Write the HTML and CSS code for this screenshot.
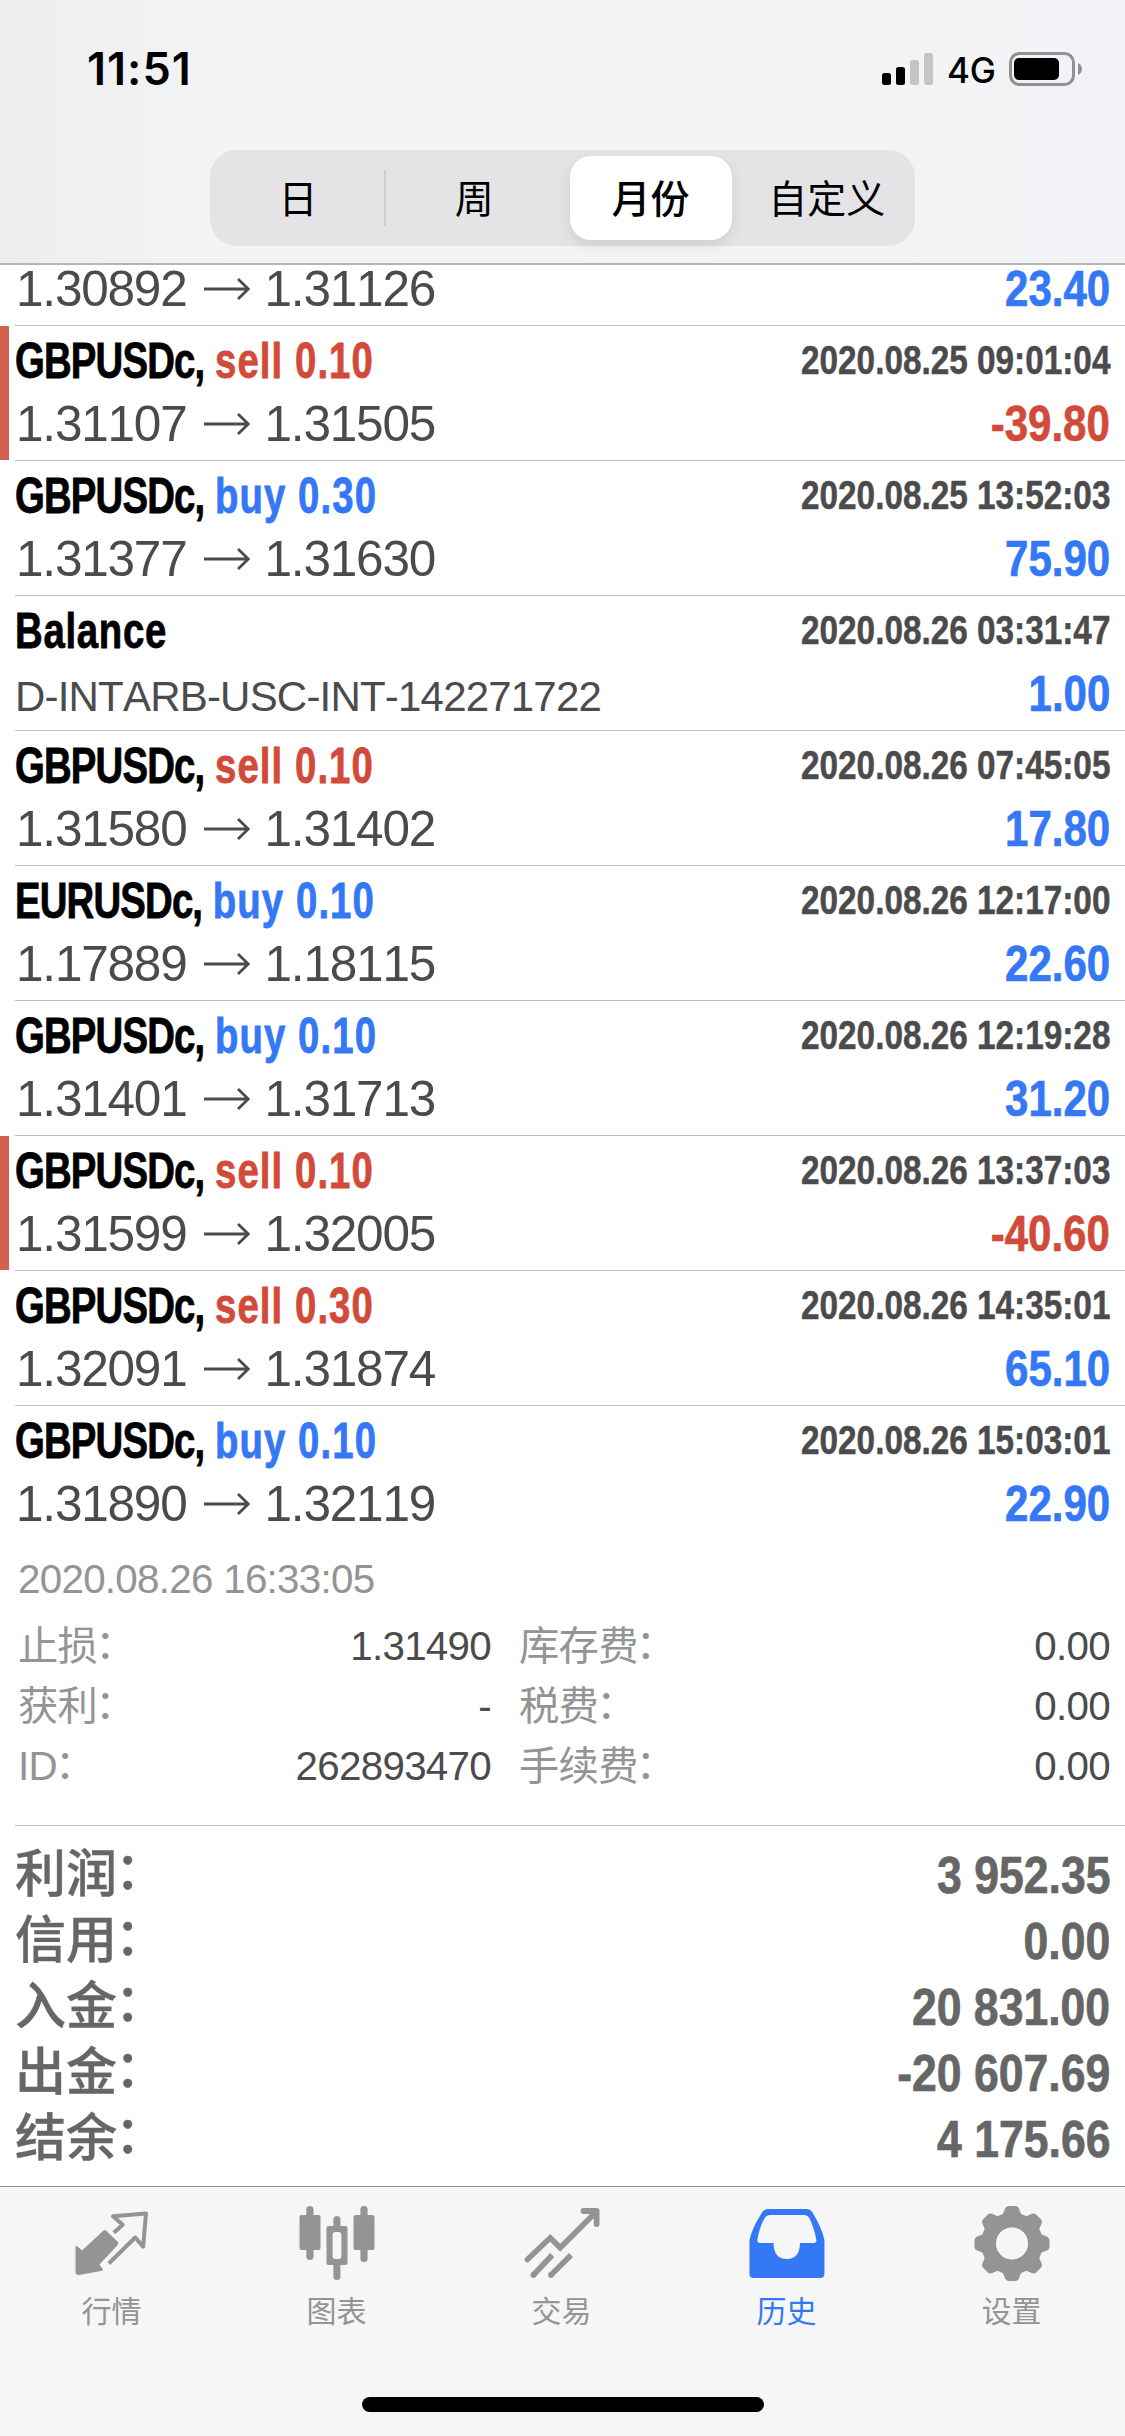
FILE: index.html
```html
<!DOCTYPE html>
<html lang="zh-CN">
<head>
<meta charset="utf-8">
<title>历史</title>
<link rel="stylesheet" href="styles.css">
</head>
<body>
<svg class="defs" width="0" height="0" aria-hidden="true">
  <symbol id="arrow" viewBox="0 0 46 24"><path d="M0 12H44M34 2L44.3 12L34 22" fill="none" stroke="currentColor" stroke-width="2.8"/></symbol>
</svg>
<header class="header">
  <div class="status">
    <span class="clock">11:51</span>
    <div class="indicators">
      <svg class="signal" viewBox="0 0 53 33"><rect y="20" width="9" height="12" rx="2.5"/><rect x="14" y="14" width="9" height="18" rx="2.5"/><rect x="28" y="7" width="9" height="25" rx="2.5" fill="#c4c4c6"/><rect x="42" width="9" height="32" rx="2.5" fill="#c4c4c6"/></svg>
      <span class="network">4G</span>
      <svg class="battery" viewBox="0 0 74 34"><rect x="1.5" y="1.5" width="63" height="31" rx="9" fill="none" stroke="#919193" stroke-width="3"/><rect x="5" y="6" width="45" height="22" rx="5"/><path d="M69 11q4 2 4 6t-4 6z" fill="#919193"/></svg>
    </div>
  </div>
  <nav class="segments">
    <span class="segment divided">日</span>
    <span class="segment">周</span>
    <span class="segment selected">月份</span>
    <span class="segment">自定义</span>
  </nav>
</header>

<main class="history">
  <div class="deal clipped"><div class="line"><span class="price">1.30892<svg class="arrow"><use href="#arrow"/></svg>1.31126</span><span class="profit blue">23.40</span></div></div>
  <div class="deal loss"><div class="line head"><span class="title"><span class="symbol">GBPUSDc,</span> <span class="side red">sell 0.10</span></span><span class="time">2020.08.25 09:01:04</span></div><div class="line"><span class="price">1.31107<svg class="arrow"><use href="#arrow"/></svg>1.31505</span><span class="profit red">-39.80</span></div></div>
  <div class="deal"><div class="line head"><span class="title"><span class="symbol">GBPUSDc,</span> <span class="side blue">buy 0.30</span></span><span class="time">2020.08.25 13:52:03</span></div><div class="line"><span class="price">1.31377<svg class="arrow"><use href="#arrow"/></svg>1.31630</span><span class="profit blue">75.90</span></div></div>
  <div class="deal"><div class="line head"><span class="title"><span class="symbol balance">Balance</span></span><span class="time">2020.08.26 03:31:47</span></div><div class="line"><span class="comment">D-INTARB-USC-INT-142271722</span><span class="profit blue">1.00</span></div></div>
  <div class="deal"><div class="line head"><span class="title"><span class="symbol">GBPUSDc,</span> <span class="side red">sell 0.10</span></span><span class="time">2020.08.26 07:45:05</span></div><div class="line"><span class="price">1.31580<svg class="arrow"><use href="#arrow"/></svg>1.31402</span><span class="profit blue">17.80</span></div></div>
  <div class="deal"><div class="line head"><span class="title"><span class="symbol">EURUSDc,</span> <span class="side blue">buy 0.10</span></span><span class="time">2020.08.26 12:17:00</span></div><div class="line"><span class="price">1.17889<svg class="arrow"><use href="#arrow"/></svg>1.18115</span><span class="profit blue">22.60</span></div></div>
  <div class="deal"><div class="line head"><span class="title"><span class="symbol">GBPUSDc,</span> <span class="side blue">buy 0.10</span></span><span class="time">2020.08.26 12:19:28</span></div><div class="line"><span class="price">1.31401<svg class="arrow"><use href="#arrow"/></svg>1.31713</span><span class="profit blue">31.20</span></div></div>
  <div class="deal loss"><div class="line head"><span class="title"><span class="symbol">GBPUSDc,</span> <span class="side red">sell 0.10</span></span><span class="time">2020.08.26 13:37:03</span></div><div class="line"><span class="price">1.31599<svg class="arrow"><use href="#arrow"/></svg>1.32005</span><span class="profit red">-40.60</span></div></div>
  <div class="deal"><div class="line head"><span class="title"><span class="symbol">GBPUSDc,</span> <span class="side red">sell 0.30</span></span><span class="time">2020.08.26 14:35:01</span></div><div class="line"><span class="price">1.32091<svg class="arrow"><use href="#arrow"/></svg>1.31874</span><span class="profit blue">65.10</span></div></div>
  <div class="deal expanded"><div class="line head"><span class="title"><span class="symbol">GBPUSDc,</span> <span class="side blue">buy 0.10</span></span><span class="time">2020.08.26 15:03:01</span></div><div class="line"><span class="price">1.31890<svg class="arrow"><use href="#arrow"/></svg>1.32119</span><span class="profit blue">22.90</span></div></div>

  <section class="details">
    <div class="opened">2020.08.26 16:33:05</div>
    <dl class="fields">
      <div class="field"><dt>止损<span class="colon">：</span></dt><dd>1.31490</dd></div>
      <div class="field"><dt>库存费<span class="colon">：</span></dt><dd>0.00</dd></div>
      <div class="field"><dt>获利<span class="colon">：</span></dt><dd>-</dd></div>
      <div class="field"><dt>税费<span class="colon">：</span></dt><dd>0.00</dd></div>
      <div class="field"><dt>ID<span class="colon">：</span></dt><dd>262893470</dd></div>
      <div class="field"><dt>手续费<span class="colon">：</span></dt><dd>0.00</dd></div>
    </dl>
  </section>

  <section class="totals">
    <div class="total"><span class="name">利润<span class="colon">：</span></span><span class="amount">3 952.35</span></div>
    <div class="total"><span class="name">信用<span class="colon">：</span></span><span class="amount">0.00</span></div>
    <div class="total"><span class="name">入金<span class="colon">：</span></span><span class="amount">20 831.00</span></div>
    <div class="total"><span class="name">出金<span class="colon">：</span></span><span class="amount">-20 607.69</span></div>
    <div class="total"><span class="name">结余<span class="colon">：</span></span><span class="amount">4 175.66</span></div>
  </section>
</main>

<footer class="tabbar">
  <nav class="tabs">
    <a class="tab"><svg class="icon" viewBox="0 0 78 78"><path d="M29 28Q30.8 26 32.5 28L43.5 38.5Q45 40 43.7 42L25.5 61.5L29 66.5Q28.8 68 27 68L5 72Q1.5 72 1.5 69V42.7Q4 43.5 8 47.5Z" fill="currentColor"/><path d="M39.8 29.8L48.7 21.7L39 13.3L72 10.4L69.2 43.7L61.2 34.5L34.8 60.5" fill="none" stroke="currentColor" stroke-width="4" stroke-linejoin="round"/></svg><span class="label">行情</span></a>
    <a class="tab"><svg class="icon" viewBox="0 0 78 78" fill="currentColor"><rect x=".5" y="12" width="21" height="35" rx="2"/><rect x="7.3" y="3" width="7.2" height="54" rx="3.5"/><path fill-rule="evenodd" d="M29.5 23H46.5Q48.5 23 48.5 25V60Q48.5 62 46.5 62H29.5Q27.5 62 27.5 60V25Q27.5 23 29.5 23ZM36.5 29Q33.6 29 33.6 32V53Q33.6 56 36.5 56H39.5Q42.4 56 42.4 53V32Q42.4 29 39.5 29Z"/><path d="M34.4 24V16.5a3.5 3.5 0 0 1 7 0V24ZM34.4 61V73.5a3.5 3.5 0 0 0 7 0V61Z"/><rect x="54.5" y="12" width="21" height="35" rx="2"/><rect x="61.4" y="3" width="7.2" height="56" rx="3.5"/></svg><span class="label">图表</span></a>
    <a class="tab"><svg class="icon" viewBox="0 0 78 78" fill="none" stroke="currentColor" stroke-width="5.6"><path d="M3.4 56.5L26.2 34.8L36.2 44.8L71.5 9.5" stroke-linecap="round" stroke-linejoin="miter"/><path d="M59.5 8H72.6V21" stroke-width="5.8" stroke-linecap="round" stroke-linejoin="round"/><path d="M28.2 52L9.4 72M47 52L27 72"/><g fill="currentColor" stroke="none"><circle cx="9.4" cy="72" r="2.9"/><circle cx="27" cy="72" r="2.9"/></g></svg><span class="label">交易</span></a>
    <a class="tab active"><svg class="icon" viewBox="0 0 78 78" fill="currentColor"><path fill-rule="evenodd" d="M19 6H57.5Q61.5 6 63.5 9.5Q73 25 75.4 37V71Q75.4 75 71.4 75H4.5Q.5 75 .5 71V37Q3 25 13 9.5Q15 6 19 6ZM20.5 12Q17.5 12 16 14.5Q10.5 24 8.4 36.5Q8 40 11 40H24.5Q24.8 56 37.8 56Q50.8 56 51 40H64.5Q68 40 67.3 36.5Q65 24 60 14.5Q58.5 12 55.5 12Z"/></svg><span class="label">历史</span></a>
    <a class="tab"><svg class="icon" viewBox="0 0 78 78"><defs><path id="tooth" d="M25.5 14Q29.5 11.5 30.5 7Q31.5 3 35 3H41Q44.5 3 45.5 7Q46.5 11.5 50.5 14L38 24Z"/></defs><g fill="currentColor"><use href="#tooth"/><use href="#tooth" transform="rotate(45 38 40.5)"/><use href="#tooth" transform="rotate(90 38 40.5)"/><use href="#tooth" transform="rotate(135 38 40.5)"/><use href="#tooth" transform="rotate(180 38 40.5)"/><use href="#tooth" transform="rotate(225 38 40.5)"/><use href="#tooth" transform="rotate(270 38 40.5)"/><use href="#tooth" transform="rotate(315 38 40.5)"/></g><circle cx="38" cy="40.5" r="23.3" fill="none" stroke="currentColor" stroke-width="15"/><circle cx="38" cy="40.5" r="15.9" fill="#f6f6f6"/></svg><span class="label">设置</span></a>
  </nav>
  <div class="home-indicator"></div>
</footer>
</body>
</html>
```
FILE: styles.css
```css
* {
  box-sizing: border-box;
}

body {
  margin: 0;
  width: 1125px;
  height: 2436px;
  overflow: hidden;
  display: flex;
  flex-direction: column;
  background: #fff;
  color: #4b4b4e;
  font-family: "Liberation Sans", "Noto Sans CJK SC", sans-serif;
  font-kerning: none;
}

.defs {
  display: none;
}

/* Header */

.header {
  height: 265px;
  flex: none;
  border-bottom: 2px solid #b5b5b7;
  background: linear-gradient(90deg, #eeeeef 0%, #f3f4f5 22%, #f4f4f5 80%, #f2f3f7 100%);
}

.status {
  height: 150px;
  padding: 0 42px 12px 87px;
  display: flex;
  align-items: center;
  justify-content: space-between;
  color: #000;
}

.clock {
  font: 600 45px/60px Inter, sans-serif;
  letter-spacing: 1px;
}

.indicators {
  display: flex;
  align-items: center;
}

.signal {
  width: 53px;
  height: 33px;
}

.network {
  margin-left: 12px;
  width: 62px;
  padding-top: 1px;
  font: 500 35px/60px Inter, sans-serif;
  letter-spacing: -0.3px;
}

.battery {
  width: 74px;
  height: 34px;
}

.segments {
  width: 705px;
  height: 96px;
  margin: 0 auto;
  display: grid;
  grid-template-columns: repeat(4, 1fr);
  border-radius: 27px;
  background: #e4e4e6;
  color: #000;
  font-size: 39px;
}

.segment {
  display: flex;
  align-items: center;
  justify-content: center;
  padding: 0 0 4px;
  background-repeat: no-repeat;
}

.divided {
  background-image: linear-gradient(#cdcdd0, #cdcdd0);
  background-size: 2px 56px;
  background-position: right 0 center;
}

.selected {
  margin: 6px 7px 6px 7px;
  border-radius: 21px;
  background: #fff;
  font-weight: 500;
  box-shadow: 0 5px 14px rgba(0, 0, 0, 0.1);
}

/* Deals */

.history {
  height: 1921px;
  flex: none;
}

.deal {
  height: 135px;
  padding: 5px 15px 0;
  background: linear-gradient(#bebec1, #bebec1) no-repeat 15px 100% / 100% 1px;
}

.clipped {
  height: 61px;
  padding-top: 0;
  display: flex;
  flex-direction: column;
  justify-content: flex-end;
  padding-bottom: 7px;
}

.loss {
  background:
    linear-gradient(#d4604f, #d4604f) no-repeat 0 0 / 9px 134px,
    linear-gradient(#bebec1, #bebec1) no-repeat 15px 100% / 100% 1px;
}

.expanded {
  background: none;
}

.line {
  height: 60px;
  line-height: 60px;
  display: flex;
  align-items: baseline;
  justify-content: space-between;
  white-space: nowrap;
}

.head {
  align-items: flex-start;
  margin-bottom: 3px;
}

.title {
  font-size: 50px;
  font-weight: bold;
  transform: scaleX(0.767);
  transform-origin: 0 0;
  -webkit-text-stroke: 0.8px currentColor;
}

.symbol {
  color: #000;
  letter-spacing: -1.1px;
}

.balance {
  letter-spacing: 0.9px;
}

.side {
  letter-spacing: 1.4px;
}

.time {
  line-height: 58px;
  font-size: 40px;
  font-weight: bold;
  transform: scaleX(0.833);
  transform-origin: 100% 0;
  -webkit-text-stroke: 0.5px currentColor;
}

.price {
  margin-left: 1px;
  font-size: 49.5px;
  letter-spacing: -1.2px;
  display: flex;
  align-items: center;
}

.arrow {
  width: 46px;
  height: 24px;
  margin: 0 15px 0 17px;
}

.comment {
  font-size: 42px;
  letter-spacing: -0.8px;
}

.profit {
  font-size: 50px;
  font-weight: bold;
  transform: scaleX(0.84);
  transform-origin: 100% 0;
  -webkit-text-stroke: 0.7px currentColor;
}

.blue {
  color: #3478f6;
}

.red {
  color: #d24a3a;
}

/* Expanded deal */

.details {
  height: 285px;
  padding: 9px 15px 0 18px;
  background: linear-gradient(#bebec1, #bebec1) no-repeat 15px 100% / 100% 1px;
  font-size: 40.3px;
  letter-spacing: -0.7px;
  line-height: 60px;
}

.opened {
  color: #949494;
}

.fields {
  margin: 7px 0 0;
  display: grid;
  grid-template-columns: 473px 1fr;
  column-gap: 28px;
}

.field {
  height: 60px;
  display: flex;
  justify-content: space-between;
}

dt {
  color: #949494;
}

dd {
  margin: 0;
}

.colon {
  margin-left: -2px;
  line-height: 0;
  vertical-align: 0.06em;
}

/* Totals */

.totals {
  padding: 16px 15px 0;
  color: #666;
  line-height: 66px;
}

.total {
  height: 66px;
  display: flex;
  justify-content: space-between;
}

.name {
  font-size: 51px;
  font-weight: 500;
  -webkit-text-stroke: 0.4px currentColor;
}

.amount {
  font-size: 51.5px;
  font-weight: bold;
  transform: scaleX(0.865);
  transform-origin: 100% 0;
  -webkit-text-stroke: 0.7px currentColor;
}

/* Tab bar */

.tabbar {
  height: 250px;
  flex: none;
  border-top: 1px solid #8e8e90;
  background: #f6f6f6;
  display: flex;
  flex-direction: column;
  align-items: center;
}

.tabs {
  width: 100%;
  height: 210px;
  padding-top: 16px;
  display: grid;
  grid-template-columns: repeat(5, 1fr);
}

.tab {
  display: flex;
  flex-direction: column;
  align-items: center;
  gap: 13px;
  color: #949494;
}

.icon {
  width: 78px;
  height: 78px;
}

.label {
  padding-right: 2px;
  font-size: 30px;
  line-height: 36px;
}

.active {
  color: #3478f6;
}

.home-indicator {
  width: 402px;
  height: 15px;
  border-radius: 8px;
  background: #000;
}
```
